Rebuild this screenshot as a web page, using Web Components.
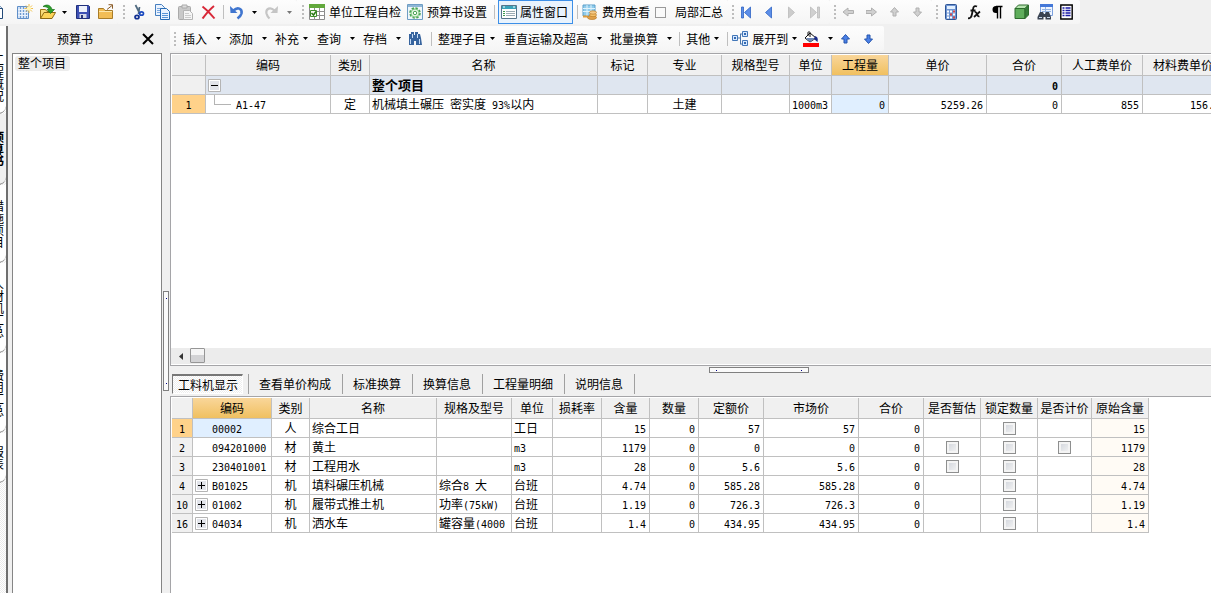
<!DOCTYPE html>
<html lang="zh-CN">
<head>
<meta charset="utf-8">
<title>预算书</title>
<style>
html, body { height: 100%; margin: 0; }
body { background: #f0f0f0; color: #000; font: 12px/16px "Noto Sans CJK SC", sans-serif; overflow: hidden; }
</style>
</head>
<body>
<budget-app></budget-app>
<script>
const ICONS = {
  doc: '<path d="M-1.500 1.500h7l3 3v10h-10z" fill="#fff" stroke="#234a78"/><path d="M5.500 1.500v3h3" fill="#dbe8f8" stroke="#234a78"/>',
  sheets: '<path d="M.5 2.500h11v12H.5z" fill="#cfe0f6" stroke="#5f8fc8"/><path d="M3.500 3v11M6.500 3v11M9.500 3v11" stroke="#6f9bd0"/><path d="M1 5.500h10M1 8.500h10M1 11.500h10" stroke="#eaf2fc"/><path d="M12 0v9M7.500 4.500h8.500M9 1.500l6 6M15 1.500l-6 6" stroke="#f0bd45"/><circle cx="12" cy="4.500" r="2.200" fill="#fff3b8"/>',
  open: '<path d="M.5 14.500v-9h5l1.500 2h5v2" fill="#f8dc7c" stroke="#9b7414"/><path d="M.5 14.500l3.500-6h11.500l-3.500 6z" fill="#fdd45a" stroke="#8b6914"/><path d="M3 2.500c4-3 8-1 9 3h2.500l-4 4-3.500-4h2c-.5-2-3-3-6-3z" fill="#2ca02c" stroke="#187018" stroke-width=".7"/>',
  save: '<path d="M1.500 1.500h12l1 1v12h-13z" fill="#3d50b4" stroke="#20307c"/><path d="M4 2h8v6H4z" fill="#eef2fb"/><path d="M4.500 10h7v4h-7z" fill="#d4d9e8"/><path d="M6 11h2v3H6z" fill="#29367c"/>',
  folder: '<path d="M.5 4.500h5l1.500 2h7.500v8H.5z" fill="#f2bd55" stroke="#a87c28"/><path d="M1 7.500h13" stroke="#fde8ad"/><path d="M9 5.500l5-4M10.500.7H14.500v4" fill="none" stroke="#8a5c28"/>',
  cut: '<path d="M3.500 1l4.500 9M7.500 3L6.500 10" stroke="#506a80" stroke-width="1.700" fill="none"/><ellipse cx="9.500" cy="9.500" rx="2" ry="1.700" fill="none" stroke="#1b4ac0" stroke-width="1.700"/><ellipse cx="5" cy="13" rx="2" ry="1.700" fill="none" stroke="#102f91" stroke-width="1.700"/>',
  copy: '<path d="M.5.5h6l3 3v8h-9z" fill="#eaf3ff" stroke="#467fbf"/><path d="M2 4.500h4M2 6.500h4M2 8.500h4" stroke="#79a7df"/><path d="M5.500 4.500h6l3 3v8h-9z" fill="#eaf3ff" stroke="#276bb4"/><path d="M7 9.500h6M7 11.500h6M7 13.500h6" stroke="#5794d7"/>',
  paste: '<rect x=".5" y="2.500" width="12" height="13" rx="1" fill="#c9c9c9" stroke="#aaa"/><path d="M4 1h5v3H4z" fill="#ddd" stroke="#aaa"/><path d="M5.500 6.500h6l3 3v6h-9z" fill="#f5f5f5" stroke="#b4b4b4"/><path d="M7 9.500h4M7 11.500h6M7 13.500h6" stroke="#ccc"/>',
  del: '<path d="M1.500 2.500c4 3 8 7 12 12M13 2C8 6 5 10 1.500 14.500" fill="none" stroke="#d82838" stroke-width="2"/>',
  undo: '<path d="M3.500 6.500c4-4 9-2 8 3-.5 2-2 3.500-4 5" fill="none" stroke="#3f75cf" stroke-width="2.600"/><path d="M0 2l.5 7h7z" fill="#3f75cf"/>',
  redo: '<path d="M9.500 6.500c-4-4-9-2-8 3 .5 2 1 3 3 5" fill="none" stroke="#c5c5c5" stroke-width="2.200"/><path d="M13 2l-.5 7h-7z" fill="#c5c5c5"/>',
  check: '<path d="M.5.500h15v15H.5z" fill="#fff" stroke="#8a8a8a"/><path d="M0 0h16v4H0z" fill="#62a83c"/><path d="M5.500 4v12M10.500 4v12M0 7.500h16M0 11.500h16" stroke="#909090"/><path d="M1.500 6.500h6v6h-6z" fill="#f5faef" stroke="#3f8f2a"/><path d="M2.500 9l2 2 2.500-3.500" fill="none" stroke="#2b7a18" stroke-width="1.500"/>',
  gear: '<path d="M.5.500h15v15H.5z" fill="#eef6fb" stroke="#6e9dc4"/><path d="M1 2h14" stroke="#8fb6d6" stroke-width="2"/><circle cx="8" cy="9" r="5" fill="#e4f6e0" stroke="#4ca356" stroke-width="1.600" stroke-dasharray="2.400 1.500"/><circle cx="8" cy="9" r="4" fill="none" stroke="#6fbf74" stroke-width=".8"/><circle cx="8" cy="9" r="1.700" fill="#fff" stroke="#4ca356"/>',
  win: '<path d="M.5 1.500h15v13H.5z" fill="#fff" stroke="#56758b"/><path d="M1 2h14v3H1z" fill="#39a3bb"/><path d="M2 3h2M12 3h2" stroke="#fff"/><path d="M2 7.500h2M2 9.500h2M2 11.500h2" stroke="#3b9c4e"/><path d="M5 7.500h9M5 9.500h9M5 11.500h9" stroke="#9aabb4"/>',
  cost: '<path d="M1 1h12v11H1z" fill="#90ccec" stroke="#5a9fca"/><path d="M1 4.500h12M1 7.500h12M5 1v11M9 1v11" stroke="#e0f3fc"/><path d="M1 12.500h5" stroke="#de9d3f" stroke-width="2"/><ellipse cx="10" cy="13.500" rx="4.500" ry="2" fill="#e1a14b" stroke="#bd7c27" stroke-width=".7"/><ellipse cx="11" cy="11" rx="3.500" ry="1.700" fill="#f4c16b" stroke="#bd7c27" stroke-width=".7"/><ellipse cx="11" cy="8.500" rx="3.500" ry="1.700" fill="#f4c987" stroke="#bd7c27" stroke-width=".7"/>',
  first: '<path d="M.5 3h2v11h-2zM9.500 3v11l-6-5.500z" fill="#5c8ee8" stroke="#2d63c4" stroke-width=".8"/>',
  prev: '<path d="M7.500 3v11l-6-5.500z" fill="#5c8ee8" stroke="#2d63c4" stroke-width=".8"/>',
  next: '<path d="M1.500 3v11l6-5.500z" fill="#ccc" stroke="#bbb" stroke-width=".8"/>',
  last: '<path d="M7.500 3h2v11h-2zM.5 3v11l6-5.500z" fill="#d0d0d0" stroke="#bbb" stroke-width=".8"/>',
  left: '<path d="M5 4v2.500h5.500v3H5V12L0 8z" fill="#d0d0d0" stroke="#b0b0b0"/>',
  right: '<path d="M5.500 4v2.500H0v3h5.500V12l5-4z" fill="#d0d0d0" stroke="#b0b0b0"/>',
  up: '<path d="M1.500 8h2.500v4h3V8h2.500l-4-4.500z" fill="#d0d0d0" stroke="#b0b0b0"/>',
  down: '<path d="M1.500 8h2.500V4h3v4h2.500l-4 4.500z" fill="#d0d0d0" stroke="#b0b0b0"/>',
  blueup: '<path d="M.5 8h2.500v4h3V8h2.500l-4-4.500z" fill="#4a80e6" stroke="#2454ad"/>',
  bluedown: '<path d="M.5 8h2.500V4h3v4h2.500l-4 4.500z" fill="#4a80e6" stroke="#2454ad"/>',
  calc: '<rect x=".5" y=".500" width="11" height="15" rx="1" fill="#6f95d2" stroke="#2e5596"/><path d="M2 2h8v3H2z" fill="#e2f0ff"/><path d="M2 7.500h2M5 7.500h2M8 7.500h2M2 10.500h2M8 10.500h2M2 13.500h2M5 13.500h2" stroke="#fff" stroke-width="2"/><path d="M5 10.500h2M8 7.500h2M8 13.500h2" stroke="#d94545" stroke-width="2"/>',
  fx: '<path d="M0 14c2 1 3.500-1 4-4l1-5c.5-3 2-3.500 4-2.500M2.500 6.500H7.500" fill="none" stroke="#111" stroke-width="1.800"/><path d="M6.500 8c3-1 2 5 5 4.500M12 7.500L6 13" fill="none" stroke="#111" stroke-width="1.700"/>',
  para: '<path d="M6 2H5a3.500 3.500 0 0 0 0 7h1z"/><path d="M6.500 2v12.500M9.500 2v12.500M5 2.500h6.500" stroke="#000" stroke-width="1.400"/>',
  cube: '<path d="M1 4.500h10v10H1z" fill="#5fad5b" stroke="#2d6b2d"/><path d="M1 4.500L4.500 1h10L11 4.500z" fill="#b7e4b0" stroke="#2d6b2d"/><path d="M11 4.500L14.500 1v10L11 14.500z" fill="#347b37" stroke="#2d6b2d"/>',
  find: '<path d="M3.500.500h12v11h-12z" fill="#eff5ff" stroke="#7ba0de"/><path d="M3 0h13v3H3z" fill="#4478d8"/><path d="M5 5.500h9M5 7.500h9M8.500 3v8" stroke="#94b4e2"/><path d="M3 8h3l1 2h1l1-2h3l2 5v2.500H8.500V13h-2v2.500H.5V13z" fill="#3a4352"/><path d="M2 13.500h3M10 13.500h3" stroke="#c5d5e8"/>',
  list: '<path d="M.8 1h11.400v14H.8z" fill="#fff" stroke="#000" stroke-width="1.400"/><path d="M2.500 4h2M5.500 4h5M2.500 6.500h2M5.500 6.500h5M2.500 9h2M5.500 9h5M2.500 11.500h2M5.500 11.500h5" stroke="#1919a5" stroke-width="1.400"/>',
  bino: '<path d="M1 3h2V1h3v3h1V1h3v2h2l1 4 1 7H8v-4H6v4H0l1-7z" transform="translate(-1 0)" fill="#37649e"/><path d="M1.500 8v5M3.500 3v4M8.500 3v4M10.500 8v5" stroke="#c6dcf6"/>',
  tree: '<path d="M6 7h3M8.500 3v10M8 3h3M8 13h3" stroke="#4d77aa" fill="none"/><path d="M.5 4.500h5v5h-5zM10.500.500h5v5h-5zM10.500 9.500h5v5h-5z" fill="#d8e9ff" stroke="#4377b8"/><path d="M2 7h2M12 3h2M12 12h2" stroke="#3268b0" stroke-width="2"/>',
  fill: '<path d="M2 7l5-5 6 5-6 4z" fill="#fff" stroke="#111"/><path d="M3 7h10l-6 4z" fill="#6f87b6"/><path d="M5 5V1.500c0-1 2-1 2 0V6" fill="none" stroke="#111"/><path d="M12 5c3 1 3 3 2.500 6L11 8z" fill="#1b2b88"/><path d="M0 12h16v4H0z" fill="#f00"/>'
};
const svg = name => `<svg width="16" height="16" viewBox="0 0 16 16" aria-hidden="true">${ICONS[name]}</svg>`;
const arrow = '<svg class="arrow" width="5" height="3" viewBox="0 0 5 3" aria-hidden="true"><path d="M0 0h5L2.500 3z"/></svg>';

function define(name, css, html, setup) {
  customElements.define(name, class extends HTMLElement {
    connectedCallback() {
      if (this.shadowRoot) return;
      const root = this.attachShadow({ mode: 'open' });
      root.innerHTML = `<style>${css}</style>${typeof html === 'function' ? html(this) : html}`;
      if (setup) setup(this, root);
    }
  });
}

define('tool-bar', `:host{display:flex;overflow:hidden;white-space:nowrap}`, '<slot></slot>');

define('tool-group', `
:host{display:flex;align-items:center;flex:none;background:linear-gradient(#fdfdfd,#f5f5f5);border-radius:0 2px 2px 0}
i{width:2px;height:14px;margin:0 4px;background:repeating-linear-gradient(#bdbdbd 0 2px,transparent 2px 4px)}
:host([wide]) i{margin-left:5px}
:host([plain]) i{display:none}
:host([plain]){margin-left:-9px}`, '<i></i><slot></slot>');

define('tool-sep', `:host{display:block;flex:none;width:1px;height:14px;margin:0 3px 0 2px;background:#bfbfbf}`, '');

/* icon, label, pressed; menu="joined" puts the arrow in the button, menu="split" beside it */
define('tool-button', `
:host{display:flex;flex:none;align-items:center}
button{display:flex;align-items:center;margin:0;padding:0 4px 0 3px;border:0;background:none;font:inherit;color:inherit;height:22px}
svg{display:block;flex:none}
.both{padding:0 5px 0 1px;gap:4px}
.both.joined{padding-right:3px}
.joined{padding-right:6px;gap:4px}
.drop{width:15px;padding:0;justify-content:center}
.narrow{width:12px;padding:0 0 0 2px;justify-content:flex-start}
.pressed{border:1px solid #3c8fe8;background:#e9f3fd;padding:0 4px 0 2px;gap:3px;height:24px;margin-right:2px}
:host([off]) .arrow{fill:#777}`, el => {
  const icon = el.getAttribute('icon'), label = el.getAttribute('label') || '', menu = el.getAttribute('menu');
  const cls = [icon && label ? 'both' : '', menu === 'joined' ? 'joined' : '', el.hasAttribute('pressed') ? 'pressed' : ''].join(' ');
  return `<button type="button" class="${cls}" aria-label="${label || el.getAttribute('name') || ''}">${icon ? svg(icon) : ''}${label}${menu === 'joined' ? arrow : ''}</button>` +
    (menu === 'split' || menu === 'narrow' ? `<button type="button" class="drop ${menu}" aria-label="更多">${arrow}</button>` : '');
});

define('tool-check', `
:host{display:block;padding-right:5px}
label{display:flex;align-items:center;gap:9px}
input{appearance:none;width:11px;height:11px;margin:0;border:1px solid #9a9a9a;background:#fafafa}`,
  '<label><input type="checkbox"><slot></slot></label>');

define('side-tabs', `
:host{display:block;width:8px;overflow:hidden;background:repeating-conic-gradient(#fff 0 25%,#ececec 0 50%) 0 0/2px 2px;box-sizing:border-box;border-right:2px solid #6f6f6f}
nav{display:flex;flex-direction:column;align-items:flex-end}
button{display:flex;align-items:center;justify-content:center;box-sizing:border-box;width:17px;padding:0;margin:0;border:0;border-bottom:1px solid #777;border-radius:0 0 8px 0;background:#fff;color:#000;font:inherit;line-height:16px}
span{writing-mode:vertical-rl;white-space:nowrap}
.on{background:#f0f0f0;font-weight:bold}`, `
<nav>
<button type="button" style="height:88px;padding-top:16px"><span>工程概况</span></button>
<button type="button" class="on" style="height:71px"><span>预算书</span></button>
<button type="button" style="height:78px"><span>措施项目</span></button>
<button type="button" style="height:90px"><span>人材机汇总</span></button>
<button type="button" style="height:80px"><span>费用汇总</span></button>
<button type="button" style="height:50px"><span>报表</span></button>
</nav>`);

define('nav-panel', `
:host{display:flex;flex-direction:column;width:150px;flex:none}
header{display:flex;align-items:center;height:25px;flex:none;padding:0 4px 2px 0}
h2{flex:1;margin:0;text-align:center;font:inherit}
button{border:0;background:none;padding:4px;margin:0;height:20px}
svg{display:block}
section{flex:1;border:1px solid #858585;border-bottom:0;background:#fff;padding:1px 2px}
a{display:inline-block;padding:0 4px 0 3px;height:15px;line-height:14px;border-radius:3px;background:#ececec;color:#000;text-decoration:none}`, `
<header><h2>预算书</h2><button type="button" aria-label="关闭"><svg width="12" height="12" viewBox="0 0 12 12"><path d="M1 1l10 10M11 1L1 11" stroke="#000" stroke-width="2"/></svg></button></header>
<section><a href="#all">整个项目</a></section>`);

define('split-bar', `
:host{display:flex;flex:none;align-items:center;justify-content:center;box-sizing:border-box}
i{display:flex;flex:none;box-sizing:border-box;justify-content:space-between;align-items:center;border:1px solid #808080;background:#fafafa;width:100px;height:6px;padding:0 6px}
i::before,i::after{content:"";width:1px;height:1px;background:#008}
:host([vertical]) i{flex-direction:column;width:6px;height:100px;padding:6px 0}`, '<i></i>');

define('tab-bar', `
:host{display:flex;height:22px;flex:none;padding-left:2px;align-items:flex-start;white-space:nowrap;overflow:hidden}
button{box-sizing:border-box;height:20px;margin:0;padding:0 11px 0 10px;border:0;border-right:1px solid #a0a0a0;background:none;color:inherit;font:inherit;line-height:20px}
.on{padding:0 4px 0 5px;margin-right:5px;border:1px solid #fff;border-top:2px solid #777;border-left:1px solid #777;line-height:17px;background:repeating-conic-gradient(#fff 0 25%,#eee 0 50%) 0 0/2px 2px}
i{width:1px;height:20px;background:#a0a0a0}`,
  () => '<button type="button" class="on">工料机显示</button><i></i>' + ['查看单价构成', '标准换算', '换算信息', '工程量明细', '说明信息'].map(t => `<button type="button">${t}</button>`).join(''));

define('scroll-bar', `
:host{display:flex;flex:none;height:16px;background:#ececec}
button{border:0;margin:0;padding:0;background:none;width:19px;height:16px}
button svg{display:block;margin:auto}
i{box-sizing:border-box;width:15px;height:15px;border:1px solid #969696;border-radius:1px;background:linear-gradient(#f5f5f5 50%,#d3d3d5 50%)}`,
  '<button type="button" aria-label="向左滚动"><svg width="4" height="7" viewBox="0 0 4 7"><path d="M4 0v7L0 3.500z" fill="#333"/></svg></button><i></i>');

/* latin text and figures are set in the half-width face */
const mixed = s => String(s).replace(/[\x20-\x7e]+/g, m => `<span class="n">${m}</span>`);

const GRIDS = {
  items: {
    head: 34, picked: '工程量',
    cols: [['编码',125,'c'],['类别',39,'m'],['名称',228,'l'],['标记',50,'l'],['专业',74,'m'],['规格型号',68,'l'],['单位',42,'l'],['工程量',57,'r'],['单价',98,'r'],['合价',75,'r'],['人工费单价',81,'r'],['材料费单价',81,'r']],
    rows: [
      { no: '', sum: true, box: 'minus', v: ['','','整个项目','','','','','','','0','',''] },
      { no: '1', on: true, leaf: true, sel: 7, v: ['A1-47','定','机械填土碾压 密实度 93%以内','','土建','','1000m3','0','5259.26','0','855','156.8'] }
    ]
  },
  parts: {
    head: 21, picked: '编码',
    cols: [['编码',79,'c'],['类别',38,'m'],['名称',127,'l'],['规格及型号',75,'l'],['单位',41,'l'],['损耗率',49,'r'],['含量',48,'r'],['数量',49,'r'],['定额价',65,'r'],['市场价',95,'r'],['合价',65,'r'],['是否暂估',57,'k'],['锁定数量',57,'k'],['是否计价',54,'k'],['原始含量',57,'r o']],
    rows: [
      { no: '1', on: true, sel: 0, v: ['00002','人','综合工日','','工日','','15','0','57','57','0','',1,'','15'] },
      { no: '2', v: ['094201000','材','黄土','','m3','','1179','0','0','0','0',1,1,1,'1179'] },
      { no: '3', v: ['230401001','材','工程用水','','m3','','28','0','5.6','5.6','0',1,1,'','28'] },
      { no: '4', box: 'plus', v: ['B01025','机','填料碾压机械','综合8 大','台班','','4.74','0','585.28','585.28','0','',1,'','4.74'] },
      { no: '10', box: 'plus', v: ['01002','机','履带式推土机','功率(75kW)','台班','','1.19','0','726.3','726.3','0','',1,'','1.19'] },
      { no: '16', box: 'plus', v: ['04034','机','洒水车','罐容量(4000','台班','','1.4','0','434.95','434.95','0','',1,'','1.4'] }
    ]
  }
};
const boxSvg = kind => `<svg width="13" height="13" viewBox="0 0 13 13" aria-hidden="true"><path d="M.5.500h12v12H.5z" fill="#fff" stroke="#b4b4b4"/><path d="M2 2h9v9H2z" fill="#e2e4ea"/><path d="M3 6.500h7${kind === 'plus' ? 'M6.500 3v7' : ''}" stroke="#000"/></svg>`;

define('data-grid', `
:host{display:block;overflow:hidden;padding:1px 0 0 1px}
table{table-layout:fixed;border-collapse:separate;border-spacing:0}
th,td{box-sizing:border-box;height:19px;padding:0;border:0 solid #c0c0c0;border-width:0 1px 1px 0;font-weight:normal;line-height:18px;white-space:nowrap;overflow:hidden;vertical-align:middle}
thead th{height:21px;line-height:20px}
th{background:#f0f0f0;text-align:center}
td{background:#fff}
.n{font-family:"DejaVu Sans Mono",monospace;font-size:10px;line-height:10px;white-space:pre}
.hot{background:linear-gradient(#f9d69a,#f0c060)}
tbody .on th{background:#ffd28a}
.m,.k{text-align:center}
.r{text-align:right;padding-right:3px}
.l{padding-left:2px}
.o{background:#fffbf5}
.sel{background:#e0efff}
.sum td{background:#dfe6f0;font-weight:bold;font-size:13px}
.c div{display:flex;align-items:center;height:18px}
.c button{border:0;padding:0;margin:0 4px 0 2px;background:none;width:13px;height:13px}
.c svg{display:block}
.c .gap{width:19px}
.c .branch{align-self:flex-start;box-sizing:border-box;width:17px;height:10px;margin:0 5px 0 8px;border:solid #b4b4b4;border-width:0 0 1px 1px}
input{appearance:none;display:block;box-sizing:border-box;width:13px;height:13px;margin:0 auto;border:1px solid #8e8f8f;background:linear-gradient(135deg,#cfd3da,#f6f6f6);box-shadow:inset 0 0 0 2px #f4f4f4}`, el => {
  const g = GRIDS[el.getAttribute('source')];
  const cell = (row, v, i) => {
    const [name, , kind] = g.cols[i];
    let body = mixed(v);
    if (kind === 'k') body = v ? `<input type="checkbox" aria-label="${name}">` : '';
    if (kind === 'c') body = '<div>' + (row.box ? `<button type="button" aria-label="${row.box === 'plus' ? '展开' : '折叠'}">${boxSvg(row.box)}</button>` : row.leaf ? '<i class="branch"></i>' : '<i class="gap"></i>') + `<span>${body}</span></div>`;
    return `<td class="${kind}${row.sel === i ? ' sel' : ''}">${body}</td>`;
  };
  const width = g.cols.reduce((a, c) => a + c[1], g.head);
  return `<table style="width:${width}px"><colgroup><col style="width:${g.head}px">${g.cols.map(c => `<col style="width:${c[1]}px">`).join('')}</colgroup>
<thead><tr><th></th>${g.cols.map(c => `<th scope="col"${c[0] === g.picked ? ' class="hot"' : ''}>${c[0]}</th>`).join('')}</tr></thead>
<tbody>${g.rows.map(r => `<tr class="${r.on ? 'on' : ''}${r.sum ? 'sum' : ''}"><th scope="row">${mixed(r.no)}</th>${r.v.map((v, i) => cell(r, v, i)).join('')}</tr>`).join('')}</tbody></table>`;
});

define('grid-panel', `
:host{display:flex;flex-direction:column;box-sizing:border-box;min-height:0;min-width:0;overflow:hidden;border:solid #a5a5a8;border-width:1px 0 0 1px;background:#fff}
:host([scroll]){border-bottom-width:1px}
data-grid{flex:1;min-height:0}
scroll-bar{margin-bottom:1px}`,
  el => `<data-grid source="${el.getAttribute('source')}"></data-grid>${el.hasAttribute('scroll') ? '<scroll-bar></scroll-bar>' : ''}`);

const btn = (icon, name, extra = '') => `<tool-button icon="${icon}" name="${name}" ${extra}></tool-button>`;
const txt = (label, menu = 'split', extra = '') => `<tool-button label="${label}" menu="${menu}" ${extra}></tool-button>`;

define('budget-app', `
:host{display:flex;flex-direction:column;height:100vh}
.top{height:24px;padding-bottom:2px;flex:none}
main{display:flex;flex:1;min-height:0}
nav-panel{margin-left:4px}
.side{width:8px;padding-top:62px}
.work{display:flex;flex-direction:column;flex:1;min-width:0}
.second{height:25px;padding-bottom:2px;flex:none}
.upper{flex:313 1 0}
.mid{height:8px;padding-left:136px}
.lower{flex:197 1 0}`, `
<tool-bar class="top">
<tool-group plain>${btn('doc','新建')}${btn('sheets','新建工程')}${btn('open','打开','menu="narrow"')}${btn('save','保存')}${btn('folder','关闭')}</tool-group>
<tool-group wide>${btn('cut','剪切')}${btn('copy','复制')}${btn('paste','粘贴')}${btn('del','删除')}<tool-sep></tool-sep>${btn('undo','撤销','menu="narrow"')}${btn('redo','重做','menu="narrow" off')}</tool-group>
<tool-group wide><tool-button icon="check" label="单位工程自检"></tool-button><tool-button icon="gear" label="预算书设置"></tool-button><tool-sep></tool-sep><tool-button icon="win" label="属性窗口" pressed></tool-button><tool-sep></tool-sep><tool-button icon="cost" label="费用查看"></tool-button><tool-check>局部汇总</tool-check></tool-group>
<tool-group>${btn('first','首条')}${btn('prev','上一条')}${btn('next','下一条')}${btn('last','末条')}</tool-group>
<tool-group>${btn('left','升级')}${btn('right','降级')}${btn('up','上移')}${btn('down','下移')}</tool-group>
<tool-group>${btn('calc','计算器')}${btn('fx','函数')}${btn('para','特殊符号')}${btn('cube','图元')}${btn('find','查找')}${btn('list','清单')}</tool-group>
</tool-bar>
<main>
<side-tabs></side-tabs>
<nav-panel></nav-panel>
<split-bar class="side" vertical></split-bar>
<div class="work">
<tool-bar class="second">
<tool-group>${txt('插入')}${txt('添加')}${txt('补充','joined')}${txt('查询')}${txt('存档')}${btn('bino','查找')}<tool-sep></tool-sep>${txt('整理子目','joined')}${txt('垂直运输及超高')}${txt('批量换算')}<tool-sep></tool-sep>${txt('其他','joined')}<tool-sep></tool-sep>${txt('展开到','joined','icon="tree"')}${btn('fill','填充颜色','menu="split"')}${btn('blueup','上移')}${btn('bluedown','下移')}</tool-group>
</tool-bar>
<grid-panel class="upper" source="items" scroll></grid-panel>
<split-bar class="mid"></split-bar>
<tab-bar></tab-bar>
<grid-panel class="lower" source="parts"></grid-panel>
</div>
</main>`);
</script>
</body>
</html>
